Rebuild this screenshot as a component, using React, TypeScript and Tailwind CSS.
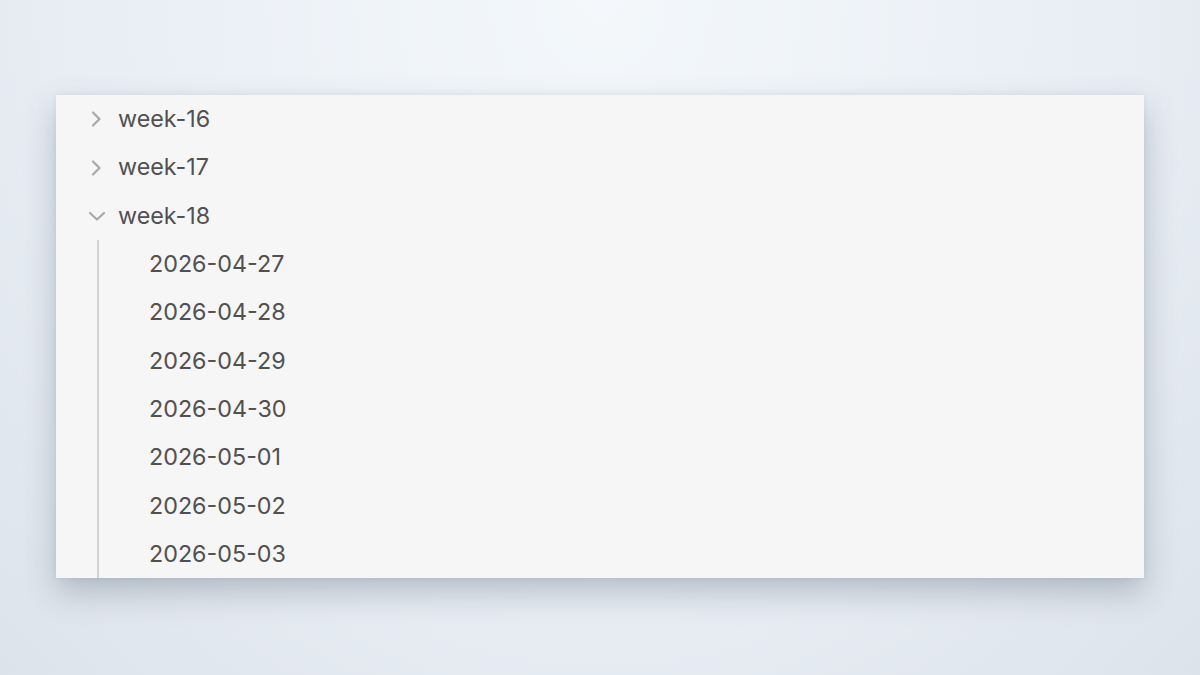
const weeks = ["week-16", "week-17"];
const days = [
  "2026-04-27",
  "2026-04-28",
  "2026-04-29",
  "2026-04-30",
  "2026-05-01",
  "2026-05-02",
  "2026-05-03",
];

function Chevron({ open }: { open?: boolean }) {
  return (
    <svg
      width="20"
      height="20"
      viewBox="0 0 20 20"
      fill="none"
      stroke="#a8a8a8"
      strokeWidth="2.2"
      strokeLinecap="round"
      strokeLinejoin="round"
    >
      {open ? <path d="M3 7l7 6.5 7-6.5" /> : <path d="M6 3.5l6.5 6.5L6 16.5" />}
    </svg>
  );
}

function FolderRow({ label, open }: { label: string; open?: boolean }) {
  return (
    <div className="flex h-[48.4px] items-center pl-[31px]">
      <span className="flex w-[31px] items-center">
        <Chevron open={open} />
      </span>
      <span className="text-[23.3px] text-[#515151]">{label}</span>
    </div>
  );
}

export default function App() {
  return (
    <div
      className="h-[675px] w-full overflow-hidden bg-[radial-gradient(ellipse_at_50%_0%,#f4f8fb_0%,#e9eef5_60%,#dce3ea_100%)] pt-[95px]"
      style={{ fontFamily: "Inter, 'Noto Sans', sans-serif" }}
    >
      <div className="mx-[56px] h-[483px] overflow-hidden bg-[#f6f6f6] shadow-[0_14px_30px_rgba(60,80,100,0.3),0_0_6px_rgba(0,0,0,0.06)]">
        {weeks.map((w) => (
          <FolderRow key={w} label={w} />
        ))}
        <FolderRow label="week-18" open />
        <div className="ml-[41px] border-l-2 border-[#d2d2d2] pl-[50px]">
          {days.map((d) => (
            <div key={d} className="flex h-[48.4px] items-center">
              <span className="text-[23.3px] text-[#515151]">{d}</span>
            </div>
          ))}
        </div>
      </div>
    </div>
  );
}
